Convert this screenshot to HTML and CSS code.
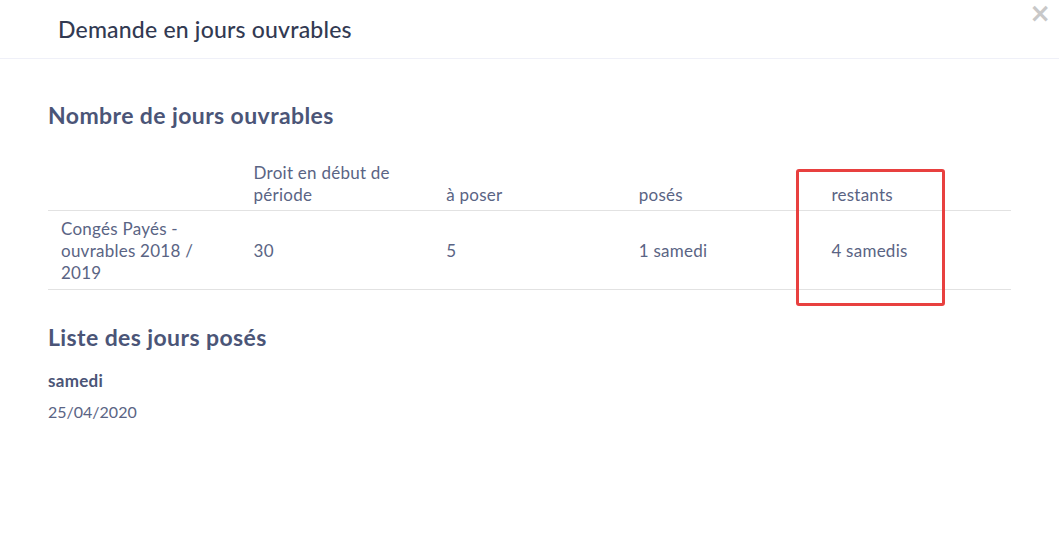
FILE: index.html
```html
<!DOCTYPE html>
<html lang="fr">
<head>
    <meta charset="UTF-8">
    <meta name="viewport" content="width=device-width, initial-scale=1.0">
    <title>Demande en jours ouvrables</title>
    <link rel="stylesheet" href="styles.css">
</head>
<body>
    <div class="modal-header">
        <h1>Demande en jours ouvrables</h1>
        <span class="close">&times;</span>
    </div>

    <div class="modal-body">
        <h2>Nombre de jours ouvrables</h2>
        <table>
            <thead>
                <tr>
                    <th></th>
                    <th>Droit en début de période</th>
                    <th>à poser</th>
                    <th>posés</th>
                    <th>restants</th>
                </tr>
            </thead>
            <tbody>
                <tr>
                    <td>Congés Payés - ouvrables 2018 / 2019</td>
                    <td>30</td>
                    <td>5</td>
                    <td>1 samedi</td>
                    <td>4 samedis</td>
                </tr>
            </tbody>
        </table>

        <h2 class="list-title">Liste des jours posés</h2>
        <div class="day-name">samedi</div>
        <div class="day-date">25/04/2020</div>
    </div>

    <div class="highlight"></div>
</body>
</html>
```

FILE: styles.css
```css
body {
    margin: 0;
    font-family: "Lato", "Noto Sans", sans-serif;
    background-color: #fff;
    color: #5a6484;
    position: relative;
    height: 550px;
}
.modal-header {
    height: 58px;
    border-bottom: 1px solid #eff0f8;
    display: flex;
    align-items: center;
    padding-left: 58px;
}
.modal-header h1 {
    margin: 0;
    font-size: 23px;
    letter-spacing: 0.2px;
    font-weight: 500;
    color: #323a52;
}
.close {
    position: absolute;
    top: -2px;
    right: 8px;
    font-size: 26px;
    font-weight: bold;
    color: #c8c8c8;
    font-family: "DejaVu Sans", sans-serif;
}
.modal-body {
    padding: 0 48px;
}
h2 {
    margin: 42px 0 26px;
    font-size: 23px;
    letter-spacing: 0.4px;
    line-height: 28px;
    font-weight: bold;
    color: #4b5577;
}
h2.list-title {
    margin: 33px 0 19px;
}
table {
    width: 100%;
    border-collapse: collapse;
    table-layout: fixed;
    font-size: 17px;
    letter-spacing: 0.25px;
    line-height: 22px;
}
th, td {
    text-align: left;
    padding: 7px 13px 6px;
    border-bottom: 1px solid #e2e2e2;
}
th {
    font-weight: normal;
    vertical-align: bottom;
    padding-bottom: 4px;
}
td {
    vertical-align: middle;
    padding-top: 7px;
    padding-bottom: 5px;
}
.day-name {
    font-size: 17px;
    letter-spacing: 0.3px;
    line-height: 22px;
    font-weight: bold;
    color: #4b5577;
}
.day-date {
    margin-top: 9px;
    font-size: 16px;
    line-height: 22px;
}
.highlight {
    position: absolute;
    left: 796px;
    top: 169px;
    width: 143px;
    height: 131px;
    border: 3px solid #e8403f;
    border-radius: 3px;
}
```
